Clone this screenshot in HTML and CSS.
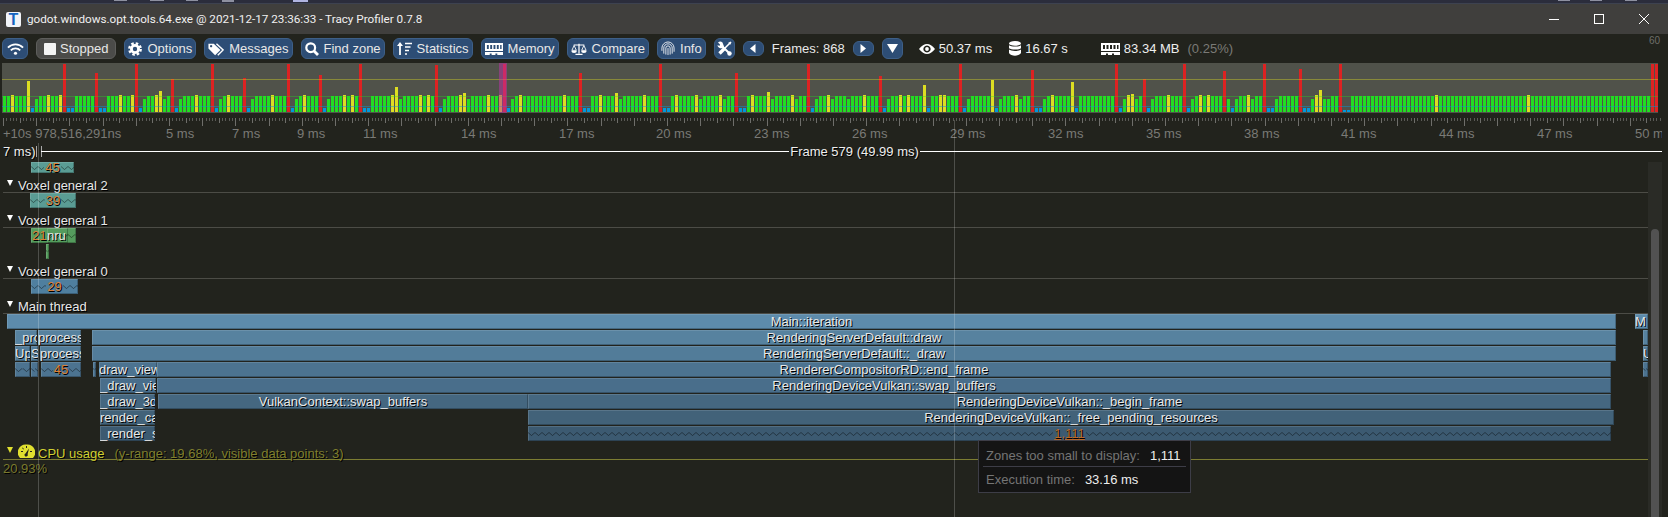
FILE: index.html
```html
<!DOCTYPE html>
<html lang="en">
<head>
    <meta charset="UTF-8">
    <title>Tracy Profiler 0.7.8</title>
    <link rel="stylesheet" href="styles.css">
</head>
<body>
    <!-- shared zigzag used by the "zones too small" blocks -->
    <svg class="defs" width="0" height="0">
        <defs>
            <pattern id="zig" width="7" height="6" patternUnits="userSpaceOnUse">
                <path d="M0 1.5 L3.5 4.5 L7 1.5" fill="none" stroke="#000" stroke-opacity="0.42" stroke-width="1"/>
            </pattern>
        </defs>
    </svg>

    <div class="window">
        <div class="desktop-strip"></div>

        <div class="titlebar">
            <span class="app-icon">T</span>
            <span class="title">godot.windows.opt.tools.64.exe @ 2021-12-17 23:36:33 - Tracy Profiler 0.7.8</span>
            <div class="win-controls">
                <svg width="10" height="10" viewBox="0 0 10 10"><path d="M0 5.5H10" stroke="#fff"/></svg>
                <svg width="10" height="10" viewBox="0 0 10 10"><rect x="0.5" y="0.5" width="9" height="9" fill="none" stroke="#fff"/></svg>
                <svg width="10" height="10" viewBox="0 0 10 10"><path d="M0 0L10 10M10 0L0 10" stroke="#fff"/></svg>
            </div>
        </div>

        <div class="toolbar">
            <button class="btn btn-wifi">
                <svg width="17" height="14" viewBox="0 0 18 14"><path d="M1 5.5a11 11 0 0 1 16 0M4 8.5a7 7 0 0 1 10 0" fill="none" stroke="currentColor" stroke-width="1.9"/><circle cx="9" cy="11.5" r="1.7" fill="currentColor"/></svg>
            </button>
            <button class="btn btn-grey btn-stopped"><span class="check"></span>Stopped</button>
            <button class="btn">
                <svg width="14" height="14" viewBox="0 0 14 14"><circle cx="7" cy="7" r="5.7" fill="none" stroke="currentColor" stroke-width="2.4" stroke-dasharray="2.5 1.98"/><circle cx="7" cy="7" r="3.6" fill="none" stroke="currentColor" stroke-width="2.8"/></svg>Options
            </button>
            <button class="btn">
                <svg width="16" height="14" viewBox="0 0 18 15"><path fill-rule="evenodd" fill="currentColor" d="M0.5 1.5H6.5L14 8.5L8 14.5L0.5 7ZM3.5 3a1.3 1.3 0 1 0 .01 0Z"/><path d="M9.5 1.5L17 8.5L11 14.5" fill="none" stroke="currentColor" stroke-width="1.6"/></svg>Messages
            </button>
            <button class="btn">
                <svg width="14" height="14" viewBox="0 0 14 14"><circle cx="5.7" cy="5.7" r="4.4" fill="none" stroke="currentColor" stroke-width="2.2"/><path d="M9 9L13 13" stroke="currentColor" stroke-width="2.8"/></svg>Find zone
            </button>
            <button class="btn">
                <svg width="15" height="15" viewBox="0 0 15 15"><path d="M3 14V4" stroke="currentColor" stroke-width="1.8"/><path d="M0 5L3 1L6 5Z" fill="currentColor"/><path d="M8 2.5H15M8 6H13.5M8 9.5H12M8 13H10" stroke="currentColor" stroke-width="1.7"/></svg>Statistics
            </button>
            <button class="btn">
                <svg width="18" height="12" viewBox="0 0 19 12" preserveAspectRatio="none"><path fill-rule="evenodd" fill="currentColor" d="M0 0H19V4V8H0ZM2 2V6H4V2ZM5.5 2V6H7.5V2ZM9 2V6H11V2ZM12.5 2V6H14.5V2ZM16 2V6H17.5V2Z"/><path d="M0 9H19V12H13V10.5H11V12H7V10.5H5V12H0Z" fill="currentColor"/></svg>Memory
            </button>
            <button class="btn">
                <svg width="16" height="14" viewBox="0 0 18 14"><path d="M9 1V12M5 13H13M3 2.5H15" stroke="currentColor" stroke-width="1.4"/><path d="M3.5 3L1 8.5H6ZM14.5 3L12 8.5H17Z" fill="none" stroke="currentColor"/><path d="M0.5 9H6.5A3 2.5 0 0 1 0.5 9ZM11.5 9H17.5A3 2.5 0 0 1 11.5 9Z" fill="currentColor"/></svg>Compare
            </button>
            <button class="btn">
                <svg width="14" height="15" viewBox="0 0 15 15"><path d="M1 10V7a6.5 6.5 0 0 1 13 0v4M3 13V7a4.5 4.5 0 0 1 9 0v6M5.2 14V7a2.3 2.3 0 0 1 4.6 0v7M7.5 7V14.5" fill="none" stroke="currentColor" stroke-width="0.9"/></svg>Info
            </button>
            <button class="btn btn-square">
                <svg width="15" height="15" viewBox="0 0 15 15"><path d="M3.5 3.5L12.5 12.5" stroke="currentColor" stroke-width="2"/><path fill-rule="evenodd" fill="currentColor" d="M0.5 4a3.5 3.5 0 0 0 5 3L7 5.5 5.5 1.5A3.5 3.5 0 0 0 1 1.5L3 3.5 2.5 5Z"/><circle cx="12.5" cy="12.5" r="2.2" fill="currentColor"/><path d="M2.5 12.5L8 7" stroke="currentColor" stroke-width="3.4"/><path d="M8 7L12 3" stroke="currentColor" stroke-width="1.6"/><path d="M11 2L13.5 0.5L14.5 1.5L13 4Z" fill="currentColor"/></svg>
            </button>
            <button class="btn btn-small">
                <svg width="6" height="9" viewBox="0 0 6 9"><path d="M5.5 0V9L0 4.5Z" fill="currentColor"/></svg>
            </button>
            <span class="frames">Frames: 868</span>
            <button class="btn btn-small">
                <svg width="6" height="9" viewBox="0 0 6 9"><path d="M0.5 0V9L6 4.5Z" fill="currentColor"/></svg>
            </button>
            <button class="btn btn-square">
                <svg width="11" height="9" viewBox="0 0 11 9"><path d="M0 0H11L5.5 9Z" fill="currentColor"/></svg>
            </button>
            <span class="stat stat-view">
                <svg width="16" height="12" viewBox="0 0 16 12"><path fill-rule="evenodd" fill="currentColor" d="M0 6Q8 -4 16 6Q8 16 0 6ZM8 2.4a3.6 3.6 0 1 0 .01 0Z"/><circle cx="8" cy="6" r="1.9" fill="currentColor"/></svg>50.37 ms
            </span>
            <span class="stat stat-time">
                <svg width="12" height="15" viewBox="0 0 12 15"><ellipse cx="6" cy="2.4" rx="6" ry="2.4" fill="currentColor"/><path d="M0 4.2C2 6 10 6 12 4.2V7.2C10 9 2 9 0 7.2ZM0 8.6C2 10.4 10 10.4 12 8.6V12C10 15.5 2 15.5 0 12Z" fill="currentColor"/></svg>16.67 s
            </span>
            <span class="stat stat-mem">
                <svg width="19" height="12" viewBox="0 0 19 12"><path fill-rule="evenodd" fill="currentColor" d="M0 0H19V8H0ZM2 2V6H4V2ZM5.5 2V6H7.5V2ZM9 2V6H11V2ZM12.5 2V6H14.5V2ZM16 2V6H17.5V2Z"/><path d="M0 9H19V12H13V10.5H11V12H7V10.5H5V12H0Z" fill="currentColor"/></svg>83.34 MB
            </span>
            <span class="percent">(0.25%)</span>
            <span class="fps-max">60</span>
        </div>

        <div class="graph" id="graph">
            <div class="graph-line line-30"></div>
            <div class="graph-line line-60"></div>
            <div class="graph-line line-144"></div>
            <div class="graph-view"></div>
        </div>

        <div class="ruler" id="ruler">
            <div class="ticks"></div>
        </div>

        <div class="timeline">
            <div class="framebar">
                <span class="frame-prev">7 ms)</span>
                <span class="frame-cap"></span>
                <span class="frame-line frame-line-long"></span>
                <span class="frame-name">Frame 579 (49.99 ms)</span>
                <span class="frame-line"></span>
            </div>

            <div class="lane" data-lane="voxel3"></div>

            <div class="thread-head"><span class="arrow"></span>Voxel general 2</div>
            <div class="lane" data-lane="voxel2"></div>

            <div class="thread-head spaced"><span class="arrow"></span>Voxel general 1</div>
            <div class="lane" data-lane="voxel1"></div>

            <div class="thread-head spaced"><span class="arrow"></span>Voxel general 0</div>
            <div class="lane" data-lane="voxel0"></div>

            <div class="thread-head spaced"><span class="arrow"></span>Main thread</div>
            <div class="lane" data-lane="main"></div>

            <div class="thread-head plot-head">
                <span class="arrow"></span>
                <svg class="gauge" width="17" height="15" viewBox="0 0 17 15"><path fill-rule="evenodd" fill="currentColor" d="M8.5 0.5A8 8 0 0 0 2 14H15A8 8 0 0 0 8.5 0.5ZM8 2V4H9V2ZM3 7V8H5V7ZM12 7V8H14V7ZM4.5 3.5L4 4L5.5 5.5L6 5ZM11 4.5L7.5 9.5A1.6 1.6 0 1 0 9.6 10.2Z"/></svg>
                <span class="plot-name">CPU usage</span>
                <span class="plot-range">(y-range: 19.68%, visible data points: 3)</span>
            </div>
            <div class="plot-value">20.93%</div>

            <!-- overlays -->
            <div class="cursor cursor-zone"></div>
            <div class="cursor cursor-mouse"></div>
            <div class="scrollbar"><div class="scroll-thumb"></div></div>
            <div class="tooltip">
                <div class="tip-row"><span class="tip-key">Zones too small to display:</span><span>1,111</span></div>
                <div class="tip-sep"></div>
                <div class="tip-row"><span class="tip-key">Execution time:</span><span>33.16 ms</span></div>
            </div>
        </div>
    </div>

    <script src="timeline.js"></script>
</body>
</html>
```

FILE: styles.css
```css
* {
    box-sizing: border-box;
}

html, body {
    margin: 0;
    padding: 0;
    background-color: #22231d;
}

.defs {
    position: absolute;
}

.window {
    width: 1668px;
    height: 517px;
    overflow: hidden;
    font-family: "Liberation Sans", Arial, sans-serif;
    font-size: 13px;
    color: #e8e8e8;
}

.desktop-strip {
    height: 3px;
    background:
        linear-gradient(#8d90a0, #8d90a0) 114px 0 / 13px 1px no-repeat,
        linear-gradient(#8d90a0, #8d90a0) 150px 0 / 14px 1px no-repeat,
        linear-gradient(#8d90a0, #8d90a0) 186px 0 / 12px 1px no-repeat,
        linear-gradient(#8d90a0, #8d90a0) 222px 0 / 12px 2px no-repeat,
        linear-gradient(#b0b4e0, #b0b4e0) 293px 0 / 15px 2px no-repeat,
        linear-gradient(#8d90a0, #8d90a0) 1558px 0 / 12px 1px no-repeat,
        linear-gradient(#8d90a0, #8d90a0) 1590px 0 / 12px 1px no-repeat,
        linear-gradient(#8d90a0, #8d90a0) 1625px 0 / 12px 1px no-repeat,
        #2b2d3c;
}

.titlebar {
    height: 31px;
    display: flex;
    align-items: center;
    padding-left: 6px;
    background-color: #403f3d;
    border-top: 1px solid #3d4250;
}

.app-icon {
    width: 15px;
    height: 15px;
    margin-right: 6px;
    border-radius: 2px;
    background-color: #f2f4f8;
    color: #1565c0;
    font-weight: bold;
    font-size: 16px;
    line-height: 15px;
    text-align: center;
}

.title {
    font-family: Roboto, sans-serif;
    font-size: 11.7px;
    color: #f0f0f0;
}

.win-controls {
    margin-left: auto;
    margin-right: 19px;
    display: flex;
    gap: 35px;
}

.toolbar {
    height: 29px;
    display: flex;
    align-items: center;
    gap: 8px;
    padding: 0 0 0 2px;
    position: relative;
}

.btn {
    height: 21px;
    display: flex;
    align-items: center;
    gap: 5px;
    padding: 0 3px;
    border: 1px solid #3e5f87;
    border-radius: 6px;
    background-color: #2d4d75;
    color: #e8e8e8;
    font: inherit;
}

.btn svg {
    flex: none;
    color: #fff;
}

.btn-grey {
    background-color: #4b4b49;
    border-color: #5e5e5c;
}

.btn-wifi {
    width: 26px;
    justify-content: center;
    padding: 0;
}

.btn-stopped {
    gap: 4px;
    padding: 0 7px;
}

.check {
    width: 12px;
    height: 12px;
    background-color: #f4f4f4;
    border-radius: 1px;
}

.btn-small {
    height: 15px;
    width: 21px;
    justify-content: center;
    padding: 0;
}

.btn-square {
    width: 21px;
    justify-content: center;
    padding: 0;
}

.stat {
    display: flex;
    align-items: center;
    gap: 4px;
    color: #eee;
}

.stat svg {
    color: #fff;
}

.stat-view {
    margin-left: 8px;
}

.stat-time {
    margin-left: 9px;
}

.stat-mem {
    margin-left: 25px;
}

.percent {
    color: #7a7a76;
}

.fps-max {
    position: absolute;
    left: 1649px;
    top: 1px;
    font-size: 10px;
    color: #6e6e6a;
}

/* frame graph */
.graph {
    position: relative;
    width: 1656px;
    height: 50px;
    margin-left: 2px;
    padding: 0 0 1px 1px;
    display: flex;
    align-items: flex-end;
    gap: 1px;
    background-color: #50524a;
}

.bar {
    width: 3px;
    flex: none;
}

.bar-g { background-color: #22dd22; }
.bar-y { background-color: #dddd22; }
.bar-r { background-color: #dd2222; }
.bar-b { background-color: #0099dd; }

.graph-line {
    position: absolute;
    left: 0;
    right: 0;
    height: 1px;
}

.line-30 {
    top: 16px;
    background-color: rgba(221, 221, 34, 0.4);
}

.line-60 {
    top: 33px;
    background-color: rgba(34, 221, 34, 0.35);
}

.line-144 {
    top: 43px;
    background-color: rgba(0, 153, 221, 0.45);
}

.graph-view {
    position: absolute;
    left: 497px;
    top: 0;
    bottom: 0;
    width: 8px;
    background-color: rgba(190, 50, 170, 0.5);
}

/* time ruler */
.ruler {
    position: relative;
    width: 1662px;
    height: 30px;
    padding: 5px 0 0 3px;
    overflow: hidden;
}

.ticks {
    height: 8px;
    --tick: #6e6e6a;
    background:
        repeating-linear-gradient(90deg, var(--tick) 0 1px, transparent 1px 33.2px) 0 0 / 100% 8px no-repeat,
        repeating-linear-gradient(90deg, var(--tick) 0 1px, transparent 1px 16.6px) 0 0 / 100% 5px no-repeat,
        repeating-linear-gradient(90deg, #5a5a56 0 1px, transparent 1px 3.32px) 0 0 / 100% 3px no-repeat;
}

.ruler-label {
    position: absolute;
    top: 13px;
    line-height: 15px;
    white-space: nowrap;
    color: #7a7a76;
}

/* timeline */
.timeline {
    position: relative;
    height: 374px;
    text-shadow: 1px 1px 0 #000;
}

.framebar {
    height: 19px;
    display: flex;
    align-items: flex-start;
    padding: 1px 6px 0 3px;
}

.frame-prev {
    line-height: 15px;
    width: 33px;
    color: #eee;
}

.frame-cap {
    width: 6px;
    height: 11px;
    margin-top: 2px;
    border-left: 1px solid #aaa;
    border-right: 1px solid #aaa;
    margin-right: -1px;
}

.frame-line {
    flex: 1;
    height: 1px;
    margin-top: 7px;
    background-color: #fff;
}

.frame-line-long {
    flex-basis: 6px;
}

.frame-name {
    padding: 0 1px;
    line-height: 15px;
    color: #eee;
}

.thread-head {
    height: 15px;
    margin: 0 20px 0 3px;
    display: flex;
    align-items: flex-end;
    line-height: 13px;
    border-bottom: 1px solid #4c4c46;
    color: #e8e8e8;
}

.thread-head.spaced {
    margin-top: 4px;
}

.arrow {
    width: 0;
    height: 0;
    margin: 0 5px 6px 4px;
    border-left: 3.5px solid transparent;
    border-right: 3.5px solid transparent;
    border-top: 6px solid #fff;
}

.lane {
    position: relative;
    height: 16px;
}

/* zones */
.zone {
    position: absolute;
    height: 15px;
    padding-top: 1px;
    display: flex;
    align-items: center;
    justify-content: center;
    overflow: hidden;
    white-space: nowrap;
    line-height: 14px;
    box-shadow: inset 1px 1px 0 rgba(255, 255, 255, 0.12), inset -1px -1px 0 rgba(0, 0, 0, 0.25);
}

.zone-left {
    justify-content: flex-start;
}

.zone-short {
    height: 11px;
    padding-top: 0;
}

.zig {
    flex: 1;
    min-width: 0;
    height: 6px;
}

.zig-count {
    padding: 0 1px;
    color: #d8803a;
}

.zig-under {
    color: #b8682c;
    text-decoration: underline;
}

.d0 { background-color: #5d8bab; }
.d1 { background-color: #57829f; }
.d2 { background-color: #527c99; }
.d3 { background-color: #4c7390; }
.d4 { background-color: #496e8b; }
.d5 { background-color: #456780; }
.d6 { background-color: #426279; }
.d7 { background-color: #3c5a71; }
.teal { background-color: #5a9c94; }
.green { background-color: #559c5d; }
.blue { background-color: #4f7f9f; }

/* cpu plot */
.plot-head {
    margin-top: 3px;
    color: #cfcf33;
    line-height: 11px;
    border-bottom-color: #7d7d32;
}

.plot-head .arrow {
    border-top-color: #e0e030;
}

.gauge {
    margin: 0 3px 0 0;
    color: #e0e030;
}

.plot-name {
    margin-right: 10px;
}

.plot-range {
    color: #7f7f2e;
}

.plot-value {
    margin: 1px 0 0 3px;
    line-height: 15px;
    color: #7a7a2e;
}

/* overlays */
.cursor {
    position: absolute;
    bottom: 0;
    width: 1px;
    background-color: rgba(255, 255, 255, 0.2);
}

.cursor-zone {
    left: 38px;
    top: 0;
}

.cursor-mouse {
    left: 954px;
    top: -23px;
}

.scrollbar {
    position: absolute;
    left: 1648px;
    top: 19px;
    bottom: 0;
    width: 14px;
    padding: 0 3px;
    background-color: #2a2b26;
}

.scroll-thumb {
    height: 100%;
    margin-top: 67px;
    border-radius: 4px 4px 0 0;
    background-color: #525252;
}

.tooltip {
    position: absolute;
    left: 978px;
    top: 297px;
    width: 213px;
    height: 53px;
    padding: 7px 7px 0;
    background-color: #141414;
    border: 1px solid #3d3d47;
    text-shadow: none;
    color: #eee;
}

.tip-row {
    line-height: 15px;
    display: flex;
    gap: 10px;
}

.tip-key {
    color: #757575;
}

.tip-sep {
    height: 1px;
    margin: 3px -3px 5px;
    background-color: #3d3d47;
}
```

FILE: timeline.js
```js
// Frame graph: every bar is a green one unless listed here
const TALL_RED = {
    15: 64, 23: 73, 33: 64, 42: 79, 52: 64, 60: 78, 71: 64, 79: 75, 89: 64, 108: 65,
    125: 64, 144: 73, 164: 64, 183: 73, 201: 64, 219: 76, 239: 64, 257: 70, 278: 64,
    285: 79, 295: 64, 305: 71, 315: 64, 324: 69, 334: 64, 412: 64, 413: 64
};
const TALL_YELLOW = {
    6: 81, 39: 91, 98: 87, 115: 93, 153: 93, 191: 92, 230: 85, 247: 80, 267: 82,
    281: 95, 282: 94, 329: 90
};
const YELLOW = [2, 11, 14, 29, 32, 38, 48, 56, 67, 75, 85, 87, 97, 104, 106, 114, 121, 124, 129,
    140, 149, 160, 168, 173, 179, 187, 197, 206, 215, 224, 226, 234, 235, 253, 262, 291, 299, 301,
    311, 328, 358, 381];
const BLUE = [7, 16, 17, 24, 25, 34, 43, 53, 61, 72, 80, 90, 91, 109, 126, 145, 146, 165, 166, 184,
    185, 202, 220, 231, 240, 248, 258, 259, 268, 279, 286, 296, 307, 316, 317, 325, 326, 335, 336];
const MID = [8, 35, 40, 44, 54, 62, 73, 81, 99, 110, 116, 127, 154, 174, 180, 192, 198, 203, 207, 211,
    221, 241, 249, 254, 260, 280, 283, 287, 297, 306, 308, 312, 318, 327, 330, 331];

const GRAPH_BOTTOM = 112;
const graph = document.getElementById('graph');

for (let i = 0; i < 414; i++) {
    const bar = document.createElement('div');
    let kind = 'g';
    let height = 16;

    if (TALL_RED[i]) {
        kind = 'r';
        height = GRAPH_BOTTOM - TALL_RED[i];
    } else if (TALL_YELLOW[i]) {
        kind = 'y';
        height = GRAPH_BOTTOM - TALL_YELLOW[i];
    } else if (YELLOW.includes(i)) {
        kind = 'y';
        height = 17;
    } else if (BLUE.includes(i)) {
        kind = 'b';
        height = i > 334 ? 2 : 4;
    } else if (MID.includes(i)) {
        height = 13;
    }

    bar.className = 'bar bar-' + kind;
    bar.style.height = height + 'px';
    graph.appendChild(bar);
}

// Time ruler labels: [x, text]
const RULER = [
    [3, '+10s 978,516,291ns'], [166, '5 ms'], [232, '7 ms'], [297, '9 ms'], [363, '11 ms'],
    [461, '14 ms'], [559, '17 ms'], [656, '20 ms'], [754, '23 ms'], [852, '26 ms'], [950, '29 ms'],
    [1048, '32 ms'], [1146, '35 ms'], [1244, '38 ms'], [1341, '41 ms'], [1439, '44 ms'],
    [1537, '47 ms'], [1635, '50 ms']
];
const ruler = document.getElementById('ruler');

RULER.forEach(([x, text]) => {
    const label = document.createElement('span');
    label.className = 'ruler-label';
    label.style.left = x + 'px';
    label.textContent = text;
    ruler.appendChild(label);
});

// Zones: [row, x0, x1, colour class, label, kind]
// kind: 'zig' = folded zones with a count, 'left' = clipped label
const LANES = {
    voxel3: [[0, 31, 74, 'teal zone-short', '45', 'zig']],
    voxel2: [[0, 30, 76, 'teal', '39', 'zig']],
    voxel1: [
        [0, 31, 76, 'green', '21', 'zig-left'],
        [0, 47, 68, 'green', 'nru', 'left'],
        [1, 46, 49, 'green', '', 'zig']
    ],
    voxel0: [[0, 31, 78, 'blue', '29', 'zig']],
    main: [
        [0, 7, 1616, 'd0', 'Main::iteration'],
        [0, 1635, 1648, 'd0', 'M', 'left'],
        [1, 15, 37, 'd1', '_process', 'left'],
        [1, 38, 81, 'd1', 'process', 'left'],
        [1, 92, 1616, 'd1', 'RenderingServerDefault::draw'],
        [1, 1643, 1648, 'd1', ''],
        [2, 15, 30, 'd2', 'Update', 'left'],
        [2, 31, 38, 'd2', 'Sync', 'left'],
        [2, 40, 81, 'd2', 'process', 'left'],
        [2, 92, 1616, 'd2', 'RenderingServerDefault::_draw'],
        [2, 1643, 1648, 'd2', 'Update', 'left'],
        [3, 15, 30, 'd3', '', 'zig'],
        [3, 31, 38, 'd3', '', 'zig'],
        [3, 41, 81, 'd3', '45', 'zig'],
        [3, 93, 96, 'd3', '', 'zig'],
        [3, 99, 157, 'd3', 'draw_viewport', 'left'],
        [3, 157, 1611, 'd3', 'RendererCompositorRD::end_frame'],
        [3, 1643, 1648, 'd3', '', 'zig'],
        [4, 100, 156, 'd4', '_draw_viewport', 'left'],
        [4, 157, 1611, 'd4', 'RenderingDeviceVulkan::swap_buffers'],
        [5, 100, 155, 'd5', '_draw_3d', 'left'],
        [5, 158, 528, 'd5', 'VulkanContext::swap_buffers'],
        [5, 528, 1611, 'd5', 'RenderingDeviceVulkan::_begin_frame'],
        [6, 100, 155, 'd6', 'render_camera', 'left'],
        [6, 528, 1614, 'd6', 'RenderingDeviceVulkan::_free_pending_resources'],
        [7, 100, 155, 'd7', '_render_scene', 'left'],
        [7, 528, 1611, 'd7', '1,111', 'zig-under']
    ]
};

function zigLine() {
    const svg = document.createElementNS('http://www.w3.org/2000/svg', 'svg');
    const rect = document.createElementNS('http://www.w3.org/2000/svg', 'rect');
    svg.setAttribute('class', 'zig');
    rect.setAttribute('width', '100%');
    rect.setAttribute('height', '100%');
    rect.setAttribute('fill', 'url(#zig)');
    svg.appendChild(rect);
    return svg;
}

document.querySelectorAll('.lane').forEach(lane => {
    const zones = LANES[lane.dataset.lane];
    const rows = Math.max(...zones.map(z => z[0])) + 1;
    lane.style.height = rows * 16 + 'px';

    zones.forEach(([row, x0, x1, cls, text, kind]) => {
        const zone = document.createElement('div');
        zone.className = 'zone ' + cls;
        zone.style.top = row * 16 + 'px';
        zone.style.left = x0 + 'px';
        zone.style.width = x1 - x0 + 'px';

        if (kind && kind.startsWith('zig')) {
            const count = document.createElement('span');
            count.className = 'zig-count' + (kind === 'zig-under' ? ' zig-under' : '');
            count.textContent = text;
            if (kind !== 'zig-left') zone.appendChild(zigLine());
            if (text) zone.appendChild(count);
            zone.appendChild(zigLine());
        } else {
            if (kind === 'left') {
                zone.classList.add('zone-left');
                if (text === 'nru') zone.style.background = 'none';
            }
            zone.appendChild(document.createTextNode(text));
        }
        lane.appendChild(zone);
    });
});
```
